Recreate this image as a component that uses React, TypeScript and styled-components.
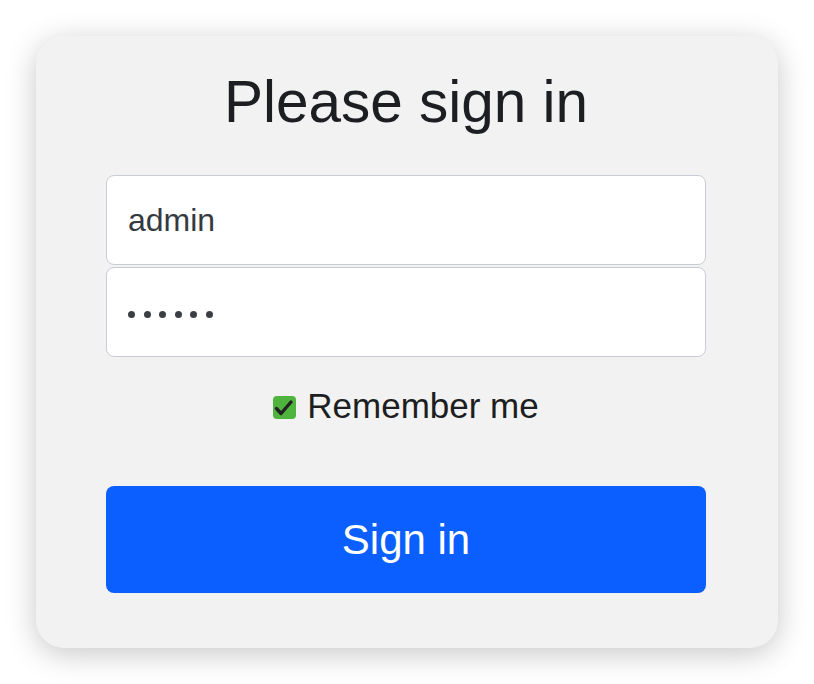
import React from "react";
import styled, { createGlobalStyle } from "styled-components";

const Global = createGlobalStyle`
  html, body { margin: 0; padding: 0; background: #ffffff; }
  body { font-family: "Liberation Sans", Arial, sans-serif; }
  * { box-sizing: border-box; }
`;

const Page = styled.div`
  width: 814px;
  height: 684px;
  padding: 36px;
`;

const Card = styled.form`
  width: 742px;
  height: 612px;
  background: #f2f2f2;
  border-radius: 28px;
  box-shadow: 0 6px 30px rgba(0, 0, 0, 0.22);
  padding: 30px 72px 55px 70px;
  display: flex;
  flex-direction: column;
`;

const Title = styled.h1`
  margin: 0 0 37px;
  font-size: 58.5px;
  line-height: 72px;
  font-weight: 400;
  color: #1c1e21;
  text-align: center;
`;

const Field = styled.div<{ $gap?: number }>`
  height: 90px;
  background: #ffffff;
  border: 1px solid #c8cdd5;
  border-radius: 8px;
  display: flex;
  align-items: center;
  padding: 0 21px;
  margin-top: ${(p) => p.$gap ?? 0}px;
  font-size: 32px;
  color: #343a40;
`;

const Dots = styled.div`
  display: flex;
  gap: 8.6px;
  padding-top: 4px;
`;

const Dot = styled.span`
  width: 7px;
  height: 7px;
  border-radius: 50%;
  background: #3b3f44;
`;

const CheckRow = styled.label`
  margin-top: 28px;
  display: flex;
  align-items: center;
  justify-content: center;
  gap: 11px;
  font-size: 35px;
  line-height: 42px;
  color: #1c1e21;
`;

const Box = styled.span`
  width: 23px;
  height: 23px;
  border-radius: 4px;
  background: #4eb43e;
  display: flex;
  margin-top: 2px;
`;

const Button = styled.button`
  margin-top: 59px;
  height: 107px;
  border: none;
  border-radius: 8px;
  background: #0b5ffe;
  color: #ffffff;
  font-family: "Liberation Sans", Arial, sans-serif;
  font-size: 42px;
  cursor: pointer;
`;

export default function App() {
  return (
    <>
      <Global />
      <Page>
        <Card onSubmit={(e) => e.preventDefault()}>
          <Title>Please sign in</Title>
          <Field>admin</Field>
          <Field $gap={2}>
            <Dots>
              {Array.from({ length: 6 }).map((_, i) => (
                <Dot key={i} />
              ))}
            </Dots>
          </Field>
          <CheckRow>
            <Box>
              <svg width="23" height="23" viewBox="0 0 23 23">
                <path
                  d="M3.5 12.5 L8 17.5 L18 6"
                  fill="none"
                  stroke="#222"
                  strokeWidth="3.4"
                  strokeLinecap="round"
                  strokeLinejoin="round"
                />
              </svg>
            </Box>
            Remember me
          </CheckRow>
          <Button type="submit">Sign in</Button>
        </Card>
      </Page>
    </>
  );
}
